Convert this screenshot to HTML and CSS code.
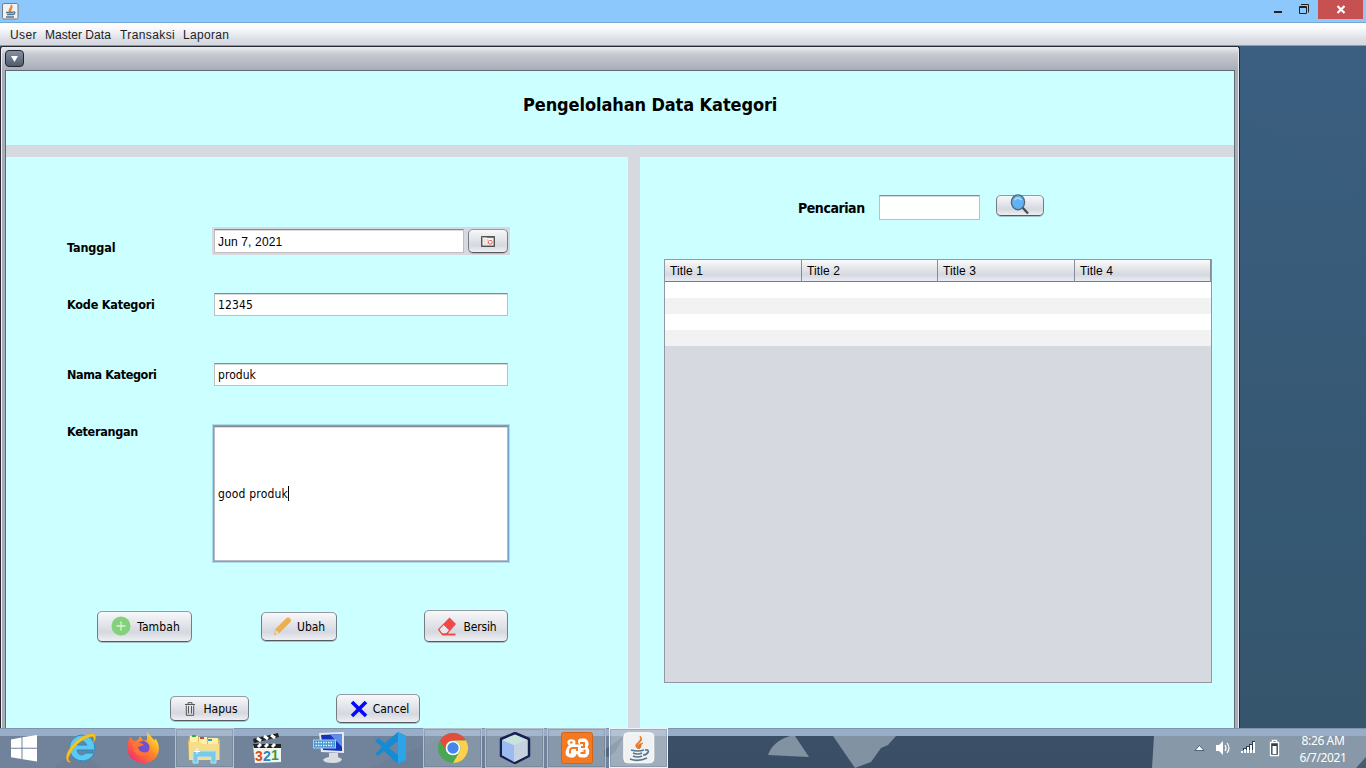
FILE: index.html
```html
<!DOCTYPE html>
<html lang="id">
<head>
<meta charset="utf-8">
<title>Pengelolahan Data Kategori</title>
<link rel="stylesheet" href="styles.css">
</head>
<body>
<div class="screen">
  <header class="titlebar">
    <svg class="app-icon" width="17" height="17" viewBox="0 0 17 17"><rect x=".5" y=".5" width="15.5" height="15.5" rx="1.5" fill="#f2f2f2" stroke="#777c83"/><path d="M8 9C5 6 11 5 9 2c3 3-2 4 0 7" fill="none" stroke="#e98223" stroke-width="1.3"/><path d="M4 9.5h7M5 11.5h5M4 14h8M11 9c3-1 2 3-1 2.5" fill="none" stroke="#53758f" stroke-width="1.4"/></svg>
    <div class="window-controls">
      <svg width="60" height="19" viewBox="0 0 60 19"><rect x="16" y="11" width="8" height="2" fill="#222"/><path d="M41.500 6.500h7v7h-7zM41 7.500h8M43 4.500h7.500V12.500" fill="none" stroke="#222"/></svg>
      <div class="close"><svg width="10" height="9" viewBox="0 0 10 9"><path d="M1.500 1l7 7M8.500 1l-7 7" stroke="#fff" stroke-width="2.200" fill="none"/></svg></div>
    </div>
  </header>
  <nav class="menubar"><span class="m1">User</span><span class="m2">Master Data</span><span class="m3">Transaksi</span><span class="m4">Laporan</span></nav>
  <main class="desktop">
    <section class="frame">
      <div class="frame-title"><div class="frame-menu"><svg width="7" height="6" viewBox="0 0 7 6"><path d="M0 0h7L3.500 6z" fill="#fff"/></svg></div></div>
      <div class="content">
        <div class="heading"><h1>Pengelolahan Data Kategori</h1></div>
        <div class="panels">
          <div class="panel form">
            <div class="row row-date"><label class="l1">Tanggal</label><div class="date"><div class="field date-field">Jun 7, 2021</div><button class="btn date-btn"><svg width="14" height="11" viewBox="0 0 14 11"><rect x=".75" y=".75" width="12.500" height="9.500" fill="#f5f2ee" stroke="#444" stroke-width="1.300"/><path d="M1 1.500h5" stroke="#e5a64e"/><path d="M6 1.500h7" stroke="#59799e"/><path d="M4 3v6M6.500 3v6" stroke="#d5d5d5"/><rect x="7.500" y="4.500" width="3.500" height="3.500" rx="1" fill="#fff" stroke="#e85d5d"/></svg></button></div></div>
            <div class="row row-code"><label class="l2">Kode Kategori</label><div class="field t2">12345</div></div>
            <div class="row row-name"><label class="l3">Nama Kategori</label><div class="field t3">produk</div></div>
            <div class="row row-note"><label class="l4">Keterangan</label><div class="field note"><span class="t4">good produk</span><i class="caret"></i></div></div>
            <div class="actions">
              <button class="btn tambah"><svg width="20" height="20" viewBox="0 0 20 20"><circle cx="10" cy="10" r="9.500" fill="#83d279"/><path d="M10 5.500v9M5.500 10h9" stroke="#e4eee4" stroke-width="1.300"/></svg><span>Tambah</span></button>
              <button class="btn ubah"><svg width="19" height="19" viewBox="0 0 19 19"><path d="M1 18l1.500-6L13 1.500q2-2 4 0t0 4L6.500 16z" fill="#edaf51"/><path d="M3 13l3 3-4 1.300z" fill="#e7dccb"/><path d="M1 18l.5-2 1.500 1.500z" fill="#edaf51"/></svg><span>Ubah</span></button>
              <button class="btn bersih"><svg width="20" height="19" viewBox="0 0 20 19"><path d="M12.500 .5L19 7 10 17.500H4.500L.8 12.500z" fill="#f04747"/><path d="M6.700 8l5.300 5.200-3 3.300H5.400L2.500 12.500z" fill="#e9e9ed"/><path d="M5 17.500h13.500" stroke="#f04747" stroke-width="1.900"/></svg><span>Bersih</span></button>
            </div>
            <div class="actions actions-2">
              <button class="btn hapus"><svg width="12" height="14" viewBox="0 0 12 14"><path d="M1 2.500h10M4 2V.7h4V2M2.300 3.500v9.800h7.400V3.500M4.500 4v7.500M7.500 4v7.500" fill="none" stroke="#555" stroke-width="1"/></svg><span>Hapus</span></button>
              <button class="btn cancel"><svg width="18" height="18" viewBox="0 0 18 18"><path d="M2 2l14 14M16 2L2 16" stroke="#0707ff" stroke-width="3.600"/></svg><span>Cancel</span></button>
            </div>
          </div>
          <div class="panel results">
            <div class="search"><label>Pencarian</label><div class="field search-field"></div><button class="btn search-btn"><svg width="20" height="21" viewBox="0 0 20 21"><path d="M12 13l6 6.500" stroke="#3e4c56" stroke-width="2.300"/><ellipse cx="8" cy="8.300" rx="6.600" ry="7.400" fill="#5fb3f5" stroke="#536a7b" stroke-width="1.400"/><path d="M4.500 6q3.500-4 7 0" fill="none" stroke="#b9ddf8" stroke-width="1.300"/></svg></button></div>
            <div class="table">
              <div class="thead"><span>Title 1</span><span>Title 2</span><span>Title 3</span><span>Title 4</span></div>
              <div class="trow"></div><div class="trow alt"></div><div class="trow"></div><div class="trow alt"></div>
            </div>
          </div>
        </div>
      </div>
    </section>
    <svg class="wallpaper" width="126" height="682" viewBox="0 0 126 682"><path d="M0 67L127 155V682H0z" fill="#385b78" opacity=".15"/></svg>
  </main>
  <footer class="taskbar">
    <svg class="shapes" width="1366" height="32" viewBox="0 0 1366 32"><path d="M0 0h668v32H0z" fill="#71839a"/><path d="M55 32q8-12 28-14l20 14zM368 32l80-32h38v32z" fill="#63778f" opacity=".3"/><path d="M768 19Q773 5 790 0h5l14 21z" fill="#8192a3"/><path d="M833 0h63l-8 9-7 3-10 14-16 6z" fill="#8192a3"/><path d="M1154 0h212v32h-214z" fill="#8799a8"/><path d="M1356 32l10-11v11z" fill="#485b71"/><path d="M604 20V14L616 6l8-6-9 16-6 5z" fill="#52677c"/></svg>
    <div class="task start"><svg width="28" height="27" viewBox="0 0 28 27"><path d="M1 4.500l10.500-2v10.300H1zM12.500 2.300L27 0v12.800H12.500zM1 13.800h10.500V24L1 22.300zM12.500 13.800H27V26.500l-14.500-2.200z" fill="#fff"/></svg></div>
    <div class="task"><svg width="32" height="32" viewBox="0 0 32 32"><path d="M17 3a13 13 0 1 0 12.400 18H21q-7 5-9-3h18Q30 4 17 3zm-5 10q5-8 10 0z" fill="#5cc8f3" stroke="#238dc8"/><path d="M3 30C-4 22 15 0 29 2q4 3-1 9 3-8-3-6Q12 8 4 24q-2 5 2 6z" fill="#f5c426" stroke="#dca51b" stroke-width=".5"/></svg></div>
    <div class="task"><svg width="32" height="32" viewBox="0 0 32 32"><defs><linearGradient id="ff" x1="1" y1="0" x2="0" y2="1"><stop offset=".1" stop-color="#ffe735"/><stop offset=".45" stop-color="#ff8626"/><stop offset=".9" stop-color="#f42b72"/></linearGradient></defs><path d="M3 5l4 4 4-1 2-4 3 5 4-1L20 0l7 8 2-1C37 20 27 32 16 31 1 30-3 17 3 5z" fill="url(#ff)"/><circle cx="16" cy="15.500" r="6.500" fill="#7350ce"/><path d="M5 9l9 2 3 2-6 2q1 7 10 5-7 8-14-1z" fill="#ff7530"/></svg></div>
    <div class="task open"><svg width="33" height="32" viewBox="0 0 33 32"><path d="M1 7l1-4h8l1 4h20l1 2v19H1L0 9z" fill="#dfbd5b"/><path d="M2 4h8v9H2zM11 5h8v8h-8zM20 6h10v8H20z" fill="#fff0a8"/><path d="M4 3h4v2H4z" fill="#37aa3c"/><path d="M12 5h4v2h-4z" fill="#cf4928"/><path d="M20 7h4v2h-4z" fill="#3799d7"/><path d="M1 10h11l3 2h16v16H1z" fill="#f6dd88"/><path d="M5 19h23v12h-5v-6H10v6H5z" fill="#79c9e8" stroke="#b8e5f5"/><path d="M9 16v6M6 19.500h6" stroke="#fff"/></svg></div>
    <div class="task"><svg width="32" height="32" viewBox="0 0 32 32"><path d="M2 13h28v17L4 31z" fill="#f4f4ef"/><path d="M2 7L27 1l1 4-25 6zM2 12h28v4H3z" fill="#222"/><path d="M6 6l4 3M13 4l4 3M20 3l4 3M7 15l3-3M14 15l3-3M21 15l3-3" stroke="#fff" stroke-width="3"/><text class="count" x="4" y="29" fill="#d74c20">3</text><text class="count" x="12" y="28.500" fill="#2787be">2</text><text class="count" x="20" y="28" fill="#379b3c">1</text></svg></div>
    <div class="task"><svg width="32" height="32" viewBox="0 0 32 32"><path d="M6 1l25-1v21L8 20z" fill="#e5e8ee"/><path d="M8 3l21-1v17L10 18z" fill="#1632bd"/><path d="M17 2.500L29 2v13z" fill="#608de5"/><path d="M16 21h9v4l4 2q-1 4-9 4-9 0-10-3 1-2 6-3z" fill="#d9dde1"/><rect x=".5" y="8" width="22" height="8" fill="#4294d4" stroke="#a0d2ef"/><path d="M2.500 10.500h18M2.500 13.500h18" stroke="#eff8ff" stroke-width="1.500" stroke-dasharray="1.500 1"/></svg></div>
    <div class="task"><svg width="33" height="32" viewBox="0 0 33 32"><path d="M24 0l8 4v24l-8 4-14-13-6 5-3-2 7-7-7-6 3-3 7 5zM24 9l-9 7 9 7z" fill="#168bd4" fill-rule="evenodd"/><path d="M24 0l8 4v24l-8 4z" fill="#2ba4ec"/></svg></div>
    <div class="task open"><svg width="32" height="32" viewBox="0 0 32 32"><circle cx="16" cy="16" r="15" fill="#49a653"/><path d="M3 8.500A15 15 0 0 1 29 8.500H16a7.500 7.500 0 0 0-6.500 11.200z" fill="#e64b3c"/><path d="M29 8.500A15 15 0 0 1 16 31l6.500-11.300A7.500 7.500 0 0 0 16 8.500z" fill="#fdd14c"/><circle cx="16" cy="16" r="7.300" fill="#fff"/><circle cx="16" cy="16" r="5.700" fill="#4587e8"/></svg></div>
    <div class="task open"><svg width="32" height="32" viewBox="0 0 32 32"><path d="M16 1l14 6v17L16 31 2 24V7z" fill="#cddce9" stroke="#18204f" stroke-width="2.500" stroke-linejoin="round"/><path d="M3 8l12 5v17L3 23z" fill="#9cbbf1"/><path d="M4 8l12-5 12 5-13 5z" fill="#c7e4dc"/><path d="M15 13l13-5v15l-13 7z" fill="#c6d2df"/></svg></div>
    <div class="task open"><svg width="32" height="32" viewBox="0 0 32 32"><rect x=".5" y=".5" width="31" height="31" rx="2" fill="#f47920" stroke="#d3651b"/><path d="M9.500 10.500h2M9.500 10.500l2 3M11 15.500h10M20 9.500h3.500q2 2 0 4.500l-2 1.500M23 16q4 3 1 6.500h-4M19 21l-3-3M9 16.500q-3 5 0 6t4-2l2-4" fill="none" stroke="#fff" stroke-width="6" stroke-linecap="round" stroke-linejoin="round"/><path d="M9 10.500h2.500M9 21.500V19q0-3 3-3h4v3M19 11h4v4h-3M23.500 17.500V21h-4" fill="none" stroke="#f47920" stroke-width="2"/></svg></div>
    <div class="task open active"><svg width="32" height="32" viewBox="0 0 32 32"><rect x=".8" y=".8" width="30" height="30" rx="4" fill="#f1f1f1" stroke="#fff"/><path d="M15 17c-7-6 5-6 2-13 6 6-6 7-2 13m1 0c-3-4 0-5 4-6-4 3 0 3-4 6" fill="#ec721d" stroke="#ec721d" stroke-width=".7"/><path d="M8 18q7 2 13 0M10 21q5 2 9 0M10 24q5 2 9 0M7 27q8 3 17-1M22 18c6-1 3 5-2 5" fill="none" stroke="#527990" stroke-width="1.700"/></svg></div>
    <div class="tray">
      <svg width="88" height="20" viewBox="0 0 88 20"><path d="M1 12.500l4.500-5 4.500 5z" fill="#fff" stroke="#27394b" stroke-width=".7"/><path d="M22 7h3l4-4v14l-4-4h-3z" fill="#fff"/><path d="M31 7q2 3 0 6M33 5q4 5 0 10" fill="none" stroke="#fff" stroke-width="1.200"/><path d="M46 12h15V3h-3v3h-3v2h-3v2h-3v2z" fill="#2b3d50"/><path d="M47 13h2v2h-2zM50 11h2v4h-2zM53 9h2v6h-2zM56 7h2v8h-2zM59 4h2v11h-2z" fill="#fff"/><path d="M76.500 4.500h8v13h-8zM78.500 4.500v-2h4v2" fill="#2e414f" stroke="#fff" stroke-width="1.300"/><path d="M78.500 8h4v8h-4z" fill="#fff"/></svg>
      <div class="clock"><span class="time">8:26 AM</span><span class="day">6/7/2021</span></div>
    </div>
  </footer>
</div>
</body>
</html>
```

FILE: styles.css
```css
* { box-sizing: border-box; }
body { margin: 0; }
.screen { width: 1366px; height: 768px; overflow: hidden; display: flex; flex-direction: column; font-family: "Liberation Sans", Arial, sans-serif; font-size: 12px; color: #000; }
svg { display: block; flex: none; }
span, label, h1 { white-space: nowrap; }

.titlebar { height: 23px; background: #8cc8fb; border-bottom: 1px solid #74a8d7; display: flex; justify-content: space-between; padding-left: 2px; flex: none; }
.app-icon { margin-top: 3px; }
.window-controls { display: flex; width: 108px; }
.close { width: 45px; height: 19px; background: #c75050; display: flex; align-items: center; justify-content: center; }

.menubar { height: 23px; flex: none; display: flex; padding: 4px 0 0 10px; background: linear-gradient(#fff 0, #f9f9fb 25%, #dcdee5 75%, #d5d8e0); border-bottom: 1px solid #9297a1; line-height: 16px; color: #222; }
.menubar span { display: block; }
.m1 { width: 35px; letter-spacing: .4px; }
.m2 { width: 75px; letter-spacing: .05px; }
.m3 { width: 63px; letter-spacing: .4px; }
.m4 { letter-spacing: .3px; }

.desktop { height: 682px; flex: none; display: flex; background: linear-gradient(#3b5f81, #35546b); }
.frame { width: 1240px; flex: none; border: 1px solid #25282e; border-bottom: 0; border-radius: 3px 3px 0 0; background: #a9adb8; padding: 0 4px; box-shadow: inset 1px 1px #eceef2, inset -1px 0 #e5e7ec; }
.frame-title { height: 23px; margin: 0 -3px; padding: 3px 0 0 3px; background: linear-gradient(#edeef1, #c7cad2 30%, #a9adb7); }
.frame-menu { width: 19px; height: 17px; border: 1px solid #202733; border-radius: 4px; background: linear-gradient(#8790a1, #4f5b6f); display: flex; align-items: center; justify-content: center; }
.content { height: 658px; border: 1px solid #626873; border-bottom: 0; background: #d6d9e0; }
.heading { height: 74px; background: #cff; padding: 22px 0 0 517px; }
h1 { margin: 0; font: bold 18px/24px "DejaVu Sans Condensed", "Noto Sans", sans-serif; letter-spacing: -.1px; }
.panels { display: grid; grid-template-columns: 622px 594px; column-gap: 12px; padding-top: 12px; height: 583px; }
.panel { background: #cff; height: 571px; }
.form { padding: 70px 0 0 61px; }
.row { display: grid; grid-template-columns: 147px 294px; }
.row-date { grid-template-columns: 145px 298px; height: 66px; }
.row-code { height: 70px; }
.row-name { height: 62px; }
.row-note { height: 185px; grid-template-columns: 146px 296px; }
label { font: bold 12.500px/16px "DejaVu Sans Condensed", "Noto Sans", sans-serif; letter-spacing: -.3px; padding-top: 4px; }
.l1 { padding-top: 13px; letter-spacing: -.1px; }
.l2 { letter-spacing: -.2px; }
.l3 { letter-spacing: -.4px; }
.l4 { padding-top: 0; margin-top: -1px; }
.field { background: #fff; height: 23px; border: 1px solid #bcbec0; border-top-color: #888a8d; box-shadow: inset 0 1px #dadada; padding: 0 3px; font: 12px/22px "DejaVu Sans Condensed", "Noto Sans", sans-serif; letter-spacing: .05px; }
.t2 { letter-spacing: .15px; }
.date { width: 298px; height: 28px; background: #d6d9e0; padding: 2px; display: flex; gap: 4px; }
.date-field { width: 250px; height: 24px; font: 12px/24px "Liberation Sans", Arial, sans-serif; letter-spacing: .15px; }
.note { height: 137px; border: 1px solid #76a5d3; box-shadow: 0 0 0 1px #a8daf3, inset 0 1px #888a8d, inset 0 0 0 1px #b8bbbe, inset 0 2px #ddd; display: flex; align-items: center; padding: 0 4px; }
.t4 { letter-spacing: .18px; }
.caret { width: 1px; height: 15px; background: #000; }
.btn { border: 1px solid #777b82; border-top-color: #969aa3; border-bottom-color: #565960; border-radius: 5px; background: linear-gradient(#f8f8fa, #e0e2e8 48%, #d5d8df 70%, #eef0f4); padding: 0; display: flex; align-items: center; justify-content: center; font: 12px/16px "DejaVu Sans Condensed", "Noto Sans", sans-serif; color: #000; box-shadow: 0 1px 0 #a2c3c9; letter-spacing: 0; }
.btn span { padding-top: 1px; }
.date-btn { width: 40px; height: 24px; }
.actions { display: flex; align-items: center; height: 32px; padding-left: 30px; }
.tambah { width: 95px; height: 31px; gap: 6px; padding-left: 2px; letter-spacing: .1px; }
.ubah { width: 76px; height: 29px; margin-left: 69px; gap: 5px; letter-spacing: -.1px; }
.bersih { width: 84px; height: 32px; margin-left: 87px; gap: 6px; padding-left: 2px; letter-spacing: -.15px; }
.actions-2 { padding-left: 103px; margin-top: 52px; height: 29px; }
.hapus { width: 79px; height: 25px; gap: 7px; padding-left: 3px; }
.cancel { width: 84px; height: 29px; margin-left: 87px; gap: 5px; padding-left: 3px; letter-spacing: 0; }
.hapus span { padding-top: 0; }
.cancel span { padding-top: 0; }

.results { padding: 38px 0 0 24px; }
.search { display: flex; height: 64px; padding-left: 134px; align-items: flex-start; }
.search label { width: 81px; font-size: 14px; padding-top: 5px; letter-spacing: -.45px; }
.search-field { width: 101px; height: 25px; }
.search-btn { width: 48px; height: 21px; margin-left: 16px; }
.search-btn svg { margin-top: -2px; }
.table { width: 548px; height: 424px; border: 1px solid #9297a1; background: #d6d9e0; }
.thead { height: 22px; display: grid; grid-template-columns: 137px 136px 137px 136px; background: linear-gradient(#fafafb, #dddfe5 55%, #d5d8e0 70%, #eaecf4); border-bottom: 1px solid #777b86; }
.thead span { border-right: 1px solid #888c96; padding-left: 5px; line-height: 22px; letter-spacing: .1px; }
.trow { height: 16px; background: #fff; }
.trow.alt { background: #f2f2f2; }

.taskbar { height: 40px; flex: none; display: flex; gap: 3px; position: relative; background: linear-gradient(#8092ad 0 1px, #98aec8 1px 8px, #3b5067 8px, #3a4f65); }
.shapes { position: absolute; left: 0; top: 8px; }
.task { width: 59px; height: 40px; flex: none; display: flex; align-items: center; justify-content: center; position: relative; }
.start { width: 48px; }
.open { border: 1px solid #b5c0cb; background: rgba(190, 201, 211, .3); box-shadow: inset 0 0 0 1px rgba(80, 98, 120, .25); }
.active { border-color: #eef2f5; background: rgba(205, 215, 222, .5); }
.count { font: bold 14px "Liberation Sans", Arial, sans-serif; }
.tray { position: relative; display: flex; margin-left: auto; width: 172px; height: 40px; align-items: center; gap: 12px; color: #fff; }
.clock { width: 58px; display: flex; flex-direction: column; align-items: center; font: 12px/17px "Noto Sans", sans-serif; letter-spacing: -.38px; padding-top: 2px; }
```
